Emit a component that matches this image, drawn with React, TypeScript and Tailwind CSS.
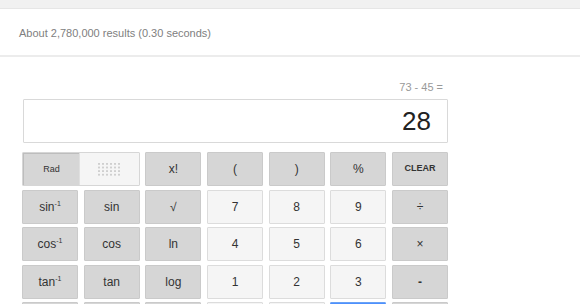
import React from "react";

type Btn = { label: React.ReactNode; kind: "dark" | "light" | "blue"; cls?: string };

const Inv = ({ t }: { t: string }) => (
  <span>
    {t}
    <span className="relative -top-[5px] text-[7px]">-1</span>
  </span>
);

const Dots = () => {
  const items: React.ReactNode[] = [];
  for (let r = 0; r < 4; r++)
    for (let c = 0; c < 6; c++)
      items.push(<rect key={`${r}-${c}`} x={c * 4} y={r * 3.6} width="2" height="1.8" fill="#cfcfcf" />);
  return (
    <svg width="22" height="13" viewBox="0 0 22 13">
      {items}
    </svg>
  );
};

export default function App() {
  const cells: Btn[] = [
    { label: "x!", kind: "dark" },
    { label: "(", kind: "dark" },
    { label: ")", kind: "dark" },
    { label: "%", kind: "dark" },
    { label: "CLEAR", kind: "dark", cls: "text-[9px] font-bold" },
    { label: <Inv t="sin" />, kind: "dark" },
    { label: "sin", kind: "dark" },
    { label: "√", kind: "dark" },
    { label: "7", kind: "light" },
    { label: "8", kind: "light" },
    { label: "9", kind: "light" },
    { label: "÷", kind: "dark" },
    { label: <Inv t="cos" />, kind: "dark" },
    { label: "cos", kind: "dark" },
    { label: "ln", kind: "dark" },
    { label: "4", kind: "light" },
    { label: "5", kind: "light" },
    { label: "6", kind: "light" },
    { label: "×", kind: "dark" },
    { label: <Inv t="tan" />, kind: "dark" },
    { label: "tan", kind: "dark" },
    { label: "log", kind: "dark" },
    { label: "1", kind: "light" },
    { label: "2", kind: "light" },
    { label: "3", kind: "light" },
    { label: "-", kind: "dark", cls: "font-bold" },
    { label: "", kind: "dark" },
    { label: "", kind: "dark" },
    { label: "", kind: "dark" },
    { label: "", kind: "light" },
    { label: "", kind: "light" },
    { label: "", kind: "blue" },
    { label: "", kind: "dark" },
  ];

  const style = (k: Btn["kind"]) =>
    k === "dark"
      ? "bg-[#d6d6d6] border-[#cacaca]"
      : k === "light"
      ? "bg-[#f5f5f5] border-[#dcdcdc]"
      : "bg-[#4d90fe] border-[#6aa2f5] text-white";

  return (
    <div className="w-[580px] h-[304px] overflow-hidden bg-white font-['Liberation_Sans',Arial,sans-serif]">
      <div className="h-[9px] bg-[#f1f1f1] border-b border-[#e6e6e6]" />
      <div className="h-[48px] flex items-center pl-[19px] pt-[2px] text-[11px] text-[#808080] border-b-2 border-[#ececec]">
        About 2,780,000 results (0.30 seconds)
      </div>
      <div className="ml-[22px] w-[426px] pt-[23px]">
        <div className="h-[14px] leading-[14px] text-right pr-[5px] text-[11px] text-[#999999]">
          73 - 45 =
        </div>
        <div className="mt-[5px] ml-[1px] h-[44px] border border-[#d9d9d9] rounded-[1px] flex items-center justify-end pr-[16px] text-[26px] text-[#222222]">
          28
        </div>
        <div className="mt-[9px] grid grid-cols-7 gap-x-[5.67px] gap-y-[3.6px] auto-rows-[34px] text-[12px] text-[#333333]">
          <div className="col-span-2 flex border border-[#d6d6d6] rounded-[1px] overflow-hidden">
            <div className="w-[56px] bg-[#d6d6d6] border-t border-l border-[#bdbdbd] flex items-center justify-center text-[9px] text-[#333333]">
              Rad
            </div>
            <div className="flex-1 bg-[#f5f5f5] border-l border-[#e0e0e0] flex items-center justify-center">
              <Dots />
            </div>
          </div>
          {cells.map((b, i) => (
            <div
              key={i}
              className={`flex items-center justify-center border rounded-[1px] ${style(b.kind)} ${b.cls ?? ""}`}
            >
              {b.label}
            </div>
          ))}
        </div>
      </div>
    </div>
  );
}
